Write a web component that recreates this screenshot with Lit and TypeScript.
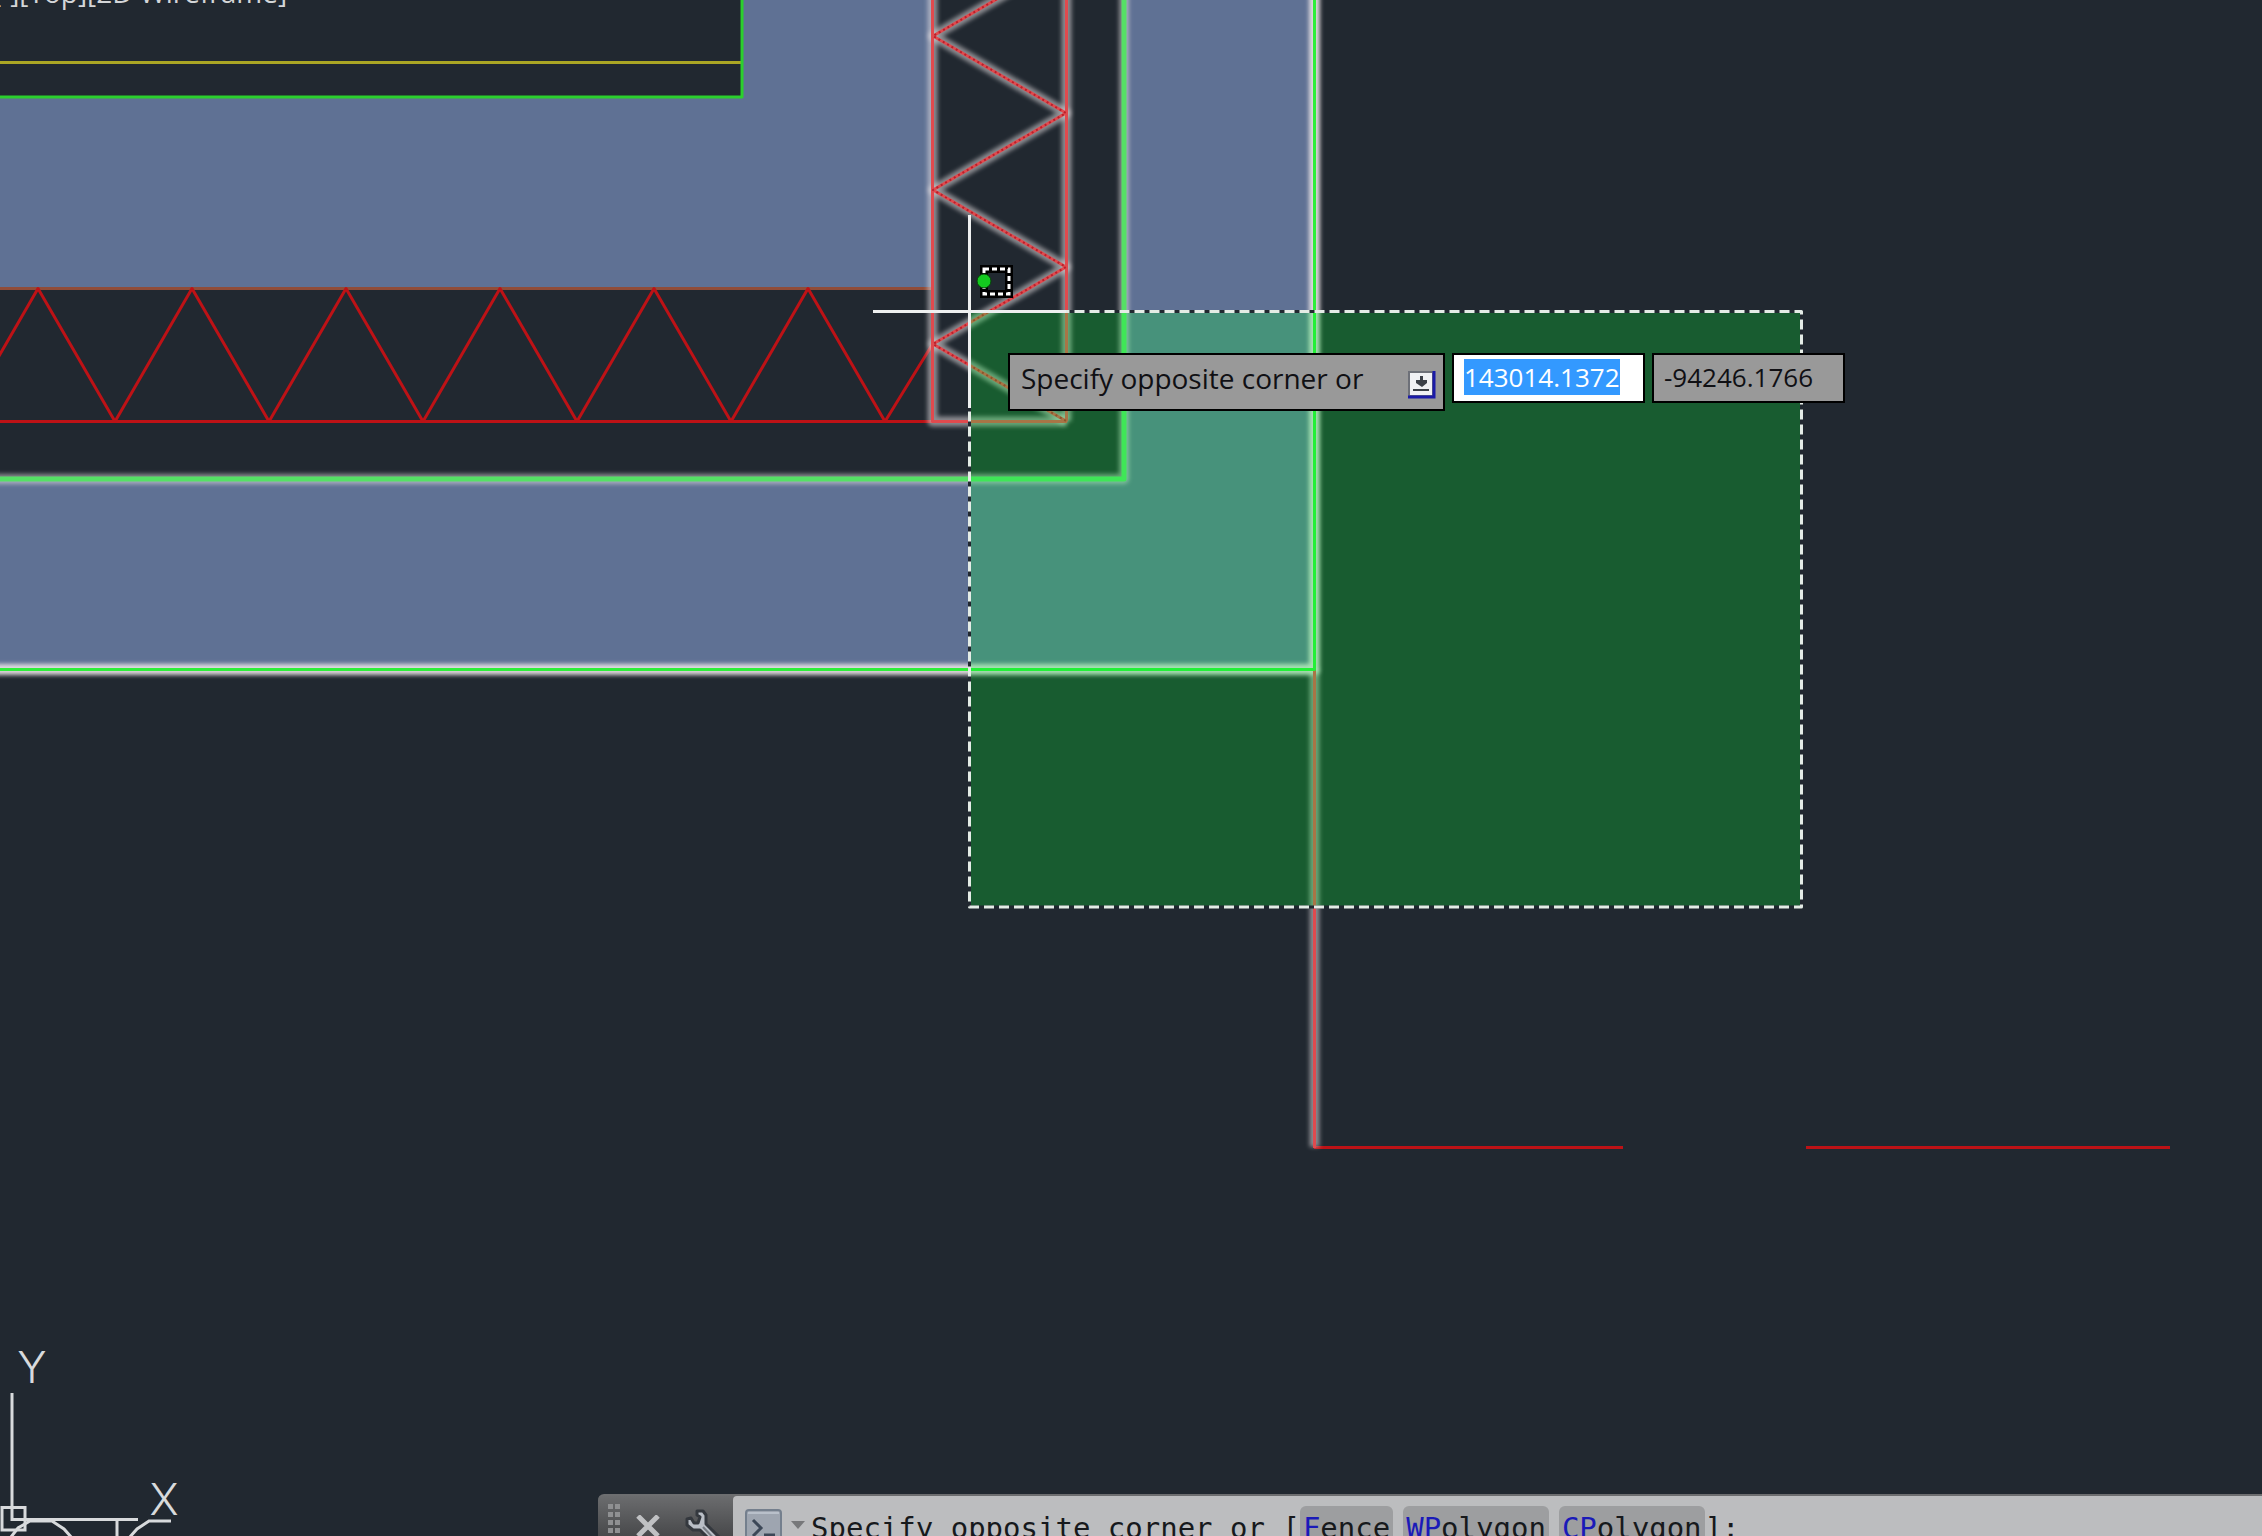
import { LitElement, html, svg, css } from "lit";
import { customElement } from "lit/decorators.js";

type Point = [number, number];

const toPoints = (points: Point[]) => points.map((p) => p.join(",")).join(" ");

/** Zigzag of the horizontal insulation layer. */
const floorTruss: Point[] = Array.from({ length: 13 }, (_, i): Point => [
  -39 + i * 77,
  i % 2 ? 288.5 : 421.5,
]);

/** Zigzag of the vertical insulation layer. */
const wallTruss: Point[] = Array.from({ length: 7 }, (_, i): Point => [
  i % 2 ? 933 : 1066,
  -41 + i * 77,
]);

@customElement("cad-drawing")
export class CadDrawing extends LitElement {
  static styles = css`
    :host {
      display: block;
      background: #212830;
    }
    .sheet {
      display: block;
      width: 100%;
      height: 100%;
    }
    .line {
      fill: none;
      stroke-width: 3;
      stroke-linejoin: round;
    }
    .hatch {
      fill: #5f7194;
    }
    .void {
      fill: #212830;
    }
    .red {
      stroke: #bd1216;
    }
    .rust {
      stroke: #904c38;
    }
    .yellow {
      stroke: #aba624;
    }
    .green {
      stroke: #2bd02d;
    }
    .halo {
      fill: none;
      stroke: #e6e0e2;
      stroke-width: 10;
      stroke-linejoin: round;
      opacity: 0.54;
      filter: url(#soften);
    }
    .halo-bright {
      opacity: 0.95;
      stroke-width: 11;
    }
    .picked-red {
      stroke: #e04a4e;
    }
    .weave {
      stroke: #b8202a;
      stroke-width: 2;
      stroke-dasharray: 2 3;
    }
    .picked-green {
      stroke: #55e065;
      stroke-width: 5;
    }
    .picked-lime {
      stroke: #2eee3a;
    }
    .window {
      fill: rgb(0, 248, 48);
      fill-opacity: 0.25;
    }
    .dash-base {
      stroke: #212830;
    }
    .dash {
      stroke: #e4ece6;
      stroke-dasharray: 10 5;
    }
    .cursor {
      stroke: #eef0f0;
    }
    .badge-edge {
      fill: none;
      stroke: #000;
      stroke-width: 8;
    }
    .badge-dash {
      fill: none;
      stroke: #fff;
      stroke-width: 3;
      stroke-dasharray: 5 3;
    }
    .badge-dot {
      fill: #13c81f;
      stroke: #06400a;
    }
    .axis {
      fill: none;
      stroke: #d8dadc;
      stroke-width: 3;
    }
    .axis-name {
      fill: #d8dadc;
      font: 300 44px Inter, "Open Sans", sans-serif;
      text-anchor: middle;
    }
  `;

  private get structure() {
    return svg`
      <path class="hatch" d="M0 0H933V288H0Z" />
      <path class="hatch" d="M1124 0H1314V669H0V479H1124Z" />
      <path class="void" d="M0 0H742V97H0Z" />
      <path class="line yellow" d="M0 62.5H742" />
      <path class="line green" d="M0 97H742V0" />
      <path class="line rust" d="M0 288.5H933" />
      <path class="line red" d="M0 421.5H933" />
      <polyline class="line red" points=${toPoints(floorTruss) + " 932,345"} />
      <path class="line red" d="M1314 1147.5H1623M1806 1147.5H2170" />
    `;
  }

  private get picked() {
    const wall = "M932.5 -10V421.5H1067M1066.5 -10V421.5";
    return svg`
      <path class="halo" d=${wall} />
      <polyline class="halo" points=${toPoints(wallTruss)} />
      <path class="halo" d="M1124 -10V479H-10" />
      <path class="halo" d="M1314.5 669V1147" />
      <path class="halo halo-bright" d="M1314.5 -10V669.5H-10" />
      <path class="line picked-red" d=${wall} />
      <polyline class="line picked-red" points=${toPoints(wallTruss)} />
      <polyline class="line weave" points=${toPoints(wallTruss)} />
      <path class="line picked-red" d="M1314.5 669V1148" />
      <path class="line picked-green" d="M1124 0V479H0" />
      <path class="line picked-lime" d="M1314.5 0V669.5H0" />
    `;
  }

  private get selection() {
    const frame = "M969.5 311.5H1801.5V907H969.5Z";
    return svg`
      <path class="window" d=${frame} />
      <path class="line dash-base" d=${frame} />
      <path class="line dash" d=${frame} />
      <path class="line cursor" d="M873 311.5H1066M969.5 215V408" />
      <path class="badge-edge" d="M984 269H1009V294H984Z" />
      <path class="badge-dash" d="M984 269H1009V294H984Z" />
      <circle class="badge-dot" cx="984" cy="281" r="7" />
    `;
  }

  private get axes() {
    return svg`
      <path class="axis" d="M12 1393V1519.5H138" />
      <path class="axis" d="M2 1507.5H25V1530H2Z" />
      <path class="axis" d="M11 1537L18 1528L30 1521H52L64 1529L72 1538M117 1520V1540M129 1538L137 1529L149 1521H171" />
      <text class="axis-name" x="32" y="1383">Y</text>
      <text class="axis-name" x="164" y="1515">X</text>
    `;
  }

  render() {
    return html`
      <svg class="sheet" role="img" aria-label="Wall corner detail">
        <defs>
          <filter id="soften" filterUnits="userSpaceOnUse" x="-20" y="-20" width="2300" height="1600">
            <feGaussianBlur stdDeviation="2" />
          </filter>
        </defs>
        ${this.structure} ${this.picked} ${this.selection} ${this.axes}
      </svg>
    `;
  }
}

@customElement("dynamic-prompt")
export class DynamicPrompt extends LitElement {
  static styles = css`
    :host {
      display: flex;
      align-items: flex-start;
      gap: 7px;
      color: #101014;
      font: 26px/36px "Open Sans", "Noto Sans", sans-serif;
    }
    .prompt,
    .field {
      box-sizing: border-box;
      border: 2px solid #000;
      background: #999;
    }
    .prompt {
      display: flex;
      align-items: center;
      justify-content: space-between;
      width: 437px;
      height: 58px;
      padding: 0 7px 8px 11px;
      font-size: 28px;
      white-space: nowrap;
    }
    .more {
      margin-top: 14px;
      padding: 0;
      border: 0;
      background: none;
      line-height: 0;
    }
    .field {
      width: 193px;
      height: 50px;
      margin: 0;
      padding: 0 10px 2px;
      border-radius: 0;
      outline: 0;
      color: inherit;
      font: inherit;
    }
    .active {
      background: #fff;
    }
    .active::selection {
      background: #3399ff;
      color: #fff;
    }
  `;

  firstUpdated() {
    const field = this.renderRoot.querySelector<HTMLInputElement>(".active");
    field?.focus({ preventScroll: true });
    field?.select();
  }

  render() {
    return html`
      <div class="prompt">
        <span>Specify opposite corner or</span>
        <button class="more" aria-label="Show options">
          <svg width="28" height="28" viewBox="0 0 28 28">
            <path d="M0 0H25V25H0Z" fill="#6d7078" />
            <path d="M2 2H24V24H2Z" fill="#f0f1f4" />
            <path d="M26 0V26H0" fill="none" stroke="#1a1aa8" stroke-width="3" />
            <path d="M12 5H15V9H19V12L14 16L8 12V9H12Z" fill="#3c4048" />
            <path d="M5 19H21" stroke="#3c4048" stroke-width="2" />
          </svg>
        </button>
      </div>
      <input class="field active" aria-label="X coordinate" value="143014.1372" />
      <input class="field" aria-label="Y coordinate" value="-94246.1766" />
    `;
  }
}

@customElement("command-line")
export class CommandLine extends LitElement {
  static styles = css`
    :host {
      display: flex;
      height: 42px;
      overflow: hidden;
      box-sizing: border-box;
      border-top: 2px solid #6d6e70;
      border-top-left-radius: 6px;
      background: linear-gradient(#6b6c6e, #48494b);
    }
    button {
      padding: 0;
      border: 0;
      background: none;
      font: inherit;
      color: inherit;
    }
    .tools {
      display: flex;
      flex: none;
      align-items: flex-start;
      box-sizing: border-box;
      width: 135px;
      padding: 7px 0 0 9px;
    }
    .close {
      margin: 12px 0 0 14px;
    }
    .options {
      margin: 6px 0 0 24px;
    }
    svg {
      display: block;
    }
    .entry {
      display: flex;
      flex: 1;
      align-items: flex-start;
      padding: 10px 0 0 12px;
      border-top-left-radius: 4px;
      background: #bcbdbf;
      color: #17191c;
      font: 29px/44px "DejaVu Sans Mono", "Liberation Mono", monospace;
      white-space: pre;
    }
    .recent {
      display: flex;
      align-items: flex-start;
      gap: 9px;
      margin: 3px 6px 0 0;
    }
    .drop {
      margin-top: 12px;
    }
    .choices {
      display: flex;
      gap: 10px;
    }
    .choice {
      height: 44px;
      padding: 0 3px;
      border-radius: 6px;
      background: #9d9ea0;
    }
    .key {
      color: #1a1ab8;
    }
  `;

  private choice(key: string, rest: string) {
    return html`<button class="choice"><span class="key">${key}</span>${rest}</button>`;
  }

  render() {
    return html`
      <div class="tools">
        <svg width="14" height="44" viewBox="0 0 14 44" fill="#8f9092">
          ${[1, 9, 17, 25, 33].map(
            (y) => svg`<rect x="1" y=${y} width="5" height="5" /><rect x="8" y=${y} width="5" height="5" />`
          )}
        </svg>
        <button class="close" aria-label="Close">
          <svg width="26" height="24" viewBox="0 0 26 24">
            <path d="M3 1L23 21M23 1L3 21" stroke="#c0c1c3" stroke-width="5" />
          </svg>
        </button>
        <button class="options" aria-label="Customize">
          <svg width="38" height="40" viewBox="0 0 38 40" stroke-linejoin="round">
            <path
              d="M12 2H18L21 6V15L38 32L32 38L15 21H8L2 16V10L6 9L9 14H13L15 8L12 6Z"
              fill="#b9bec6"
              stroke="#34383e"
              stroke-width="3"
            />
            <path d="M18 18L34 35" stroke="#767b83" stroke-width="2" />
          </svg>
        </button>
      </div>
      <div class="entry">
        <button class="recent" aria-label="Recent commands">
          <svg width="37" height="40" viewBox="0 0 37 40">
            <rect x="1" y="1" width="35" height="42" rx="3" fill="#9ea5b0" stroke="#747f8d" stroke-width="2" />
            <path d="M3 4H34" stroke="#b9c0ca" stroke-width="2" />
            <path d="M8 11L16 19L8 27" fill="none" stroke="#3c4757" stroke-width="3" />
            <path d="M19 26H30" stroke="#3c4757" stroke-width="3" />
          </svg>
          <svg class="drop" width="14" height="8" viewBox="0 0 14 8">
            <path d="M0 0H14L7 8Z" fill="#77787a" />
          </svg>
        </button>
        <span>Specify opposite corner or [</span>
        <div class="choices">
          ${this.choice("F", "ence")}${this.choice("WP", "olygon")}${this.choice("CP", "olygon")}
        </div>
        <span>]:</span>
      </div>
    `;
  }
}

@customElement("app-root")
export class AppRoot extends LitElement {
  static styles = css`
    :host {
      display: flex;
      flex-direction: column;
      position: relative;
      height: 100vh;
      overflow: hidden;
      background: #212830;
    }
    .drawing {
      position: absolute;
      inset: 0;
    }
    .viewport-controls {
      position: absolute;
      top: -28px;
      left: -8px;
      display: flex;
    }
    .control {
      padding: 0;
      border: 0;
      background: none;
      color: #d4d6d8;
      font: 28px/40px "Open Sans", "Noto Sans", sans-serif;
    }
    .prompt {
      position: absolute;
      top: 353px;
      left: 1008px;
    }
    .command {
      position: relative;
      margin: auto 0 0 598px;
    }
  `;

  render() {
    return html`
      <cad-drawing class="drawing"></cad-drawing>
      <nav class="viewport-controls" aria-label="Viewport">
        <button class="control">[-]</button>
        <button class="control">[Top]</button>
        <button class="control">[2D Wireframe]</button>
      </nav>
      <dynamic-prompt class="prompt"></dynamic-prompt>
      <command-line class="command"></command-line>
    `;
  }
}
